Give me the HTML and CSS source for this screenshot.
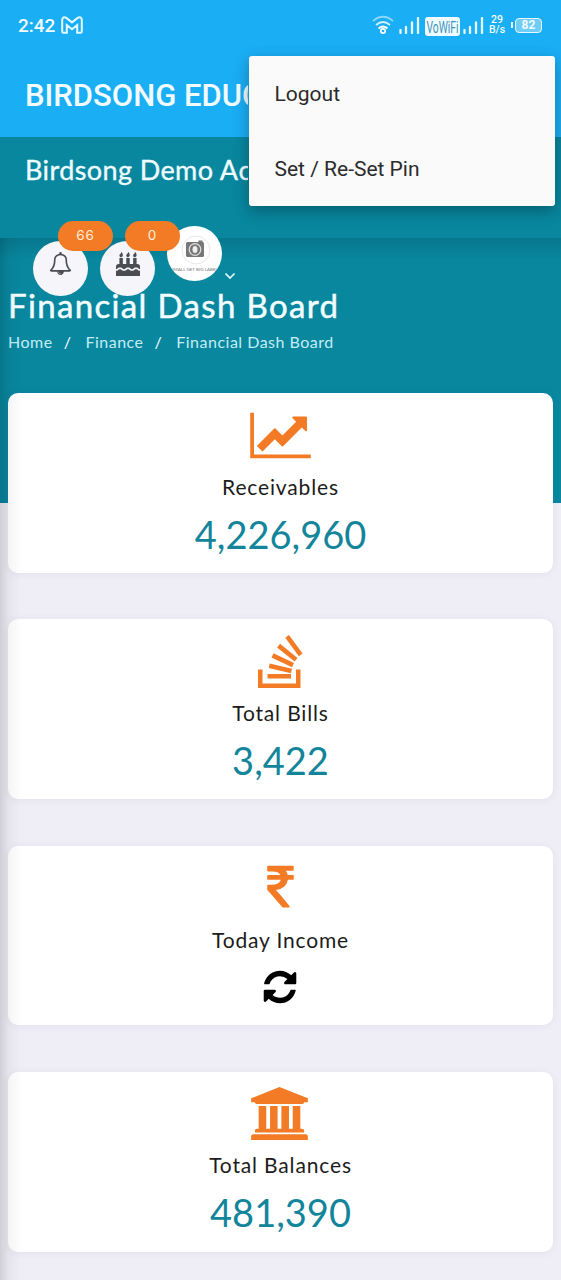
FILE: index.html
```html
<!DOCTYPE html>
<html lang="en">
<head>
  <meta charset="UTF-8">
  <meta name="viewport" content="width=device-width, initial-scale=1">
  <title>Financial Dash Board</title>
  <link rel="stylesheet" href="styles.css">
</head>
<body>
  <header class="app-bar">
    <div class="status-bar">
      <span class="clock">2:42</span>
      <svg class="mail-icon" viewBox="0 0 22 18" width="22" height="18">
        <path d="M1.200 4v11.500q0 1.300 1.300 1.300h3.300V9l5.200 4.200L16.200 9v7.800h3.300q1.300 0 1.300-1.300V3.500Q20 .2 17 1.700l-6 4.700-6-4.700Q2 .2 1.200 3.500z"/>
      </svg>
      <div class="status-right">
        <svg class="wifi" viewBox="0 0 22 20" width="22" height="20">
          <path d="M1 6q10-8.500 20 0" opacity=".5"/>
          <path d="M4 10q7-6 14 0" opacity=".8"/>
          <path d="M6.500 13.500q4.500-4 9 0"/>
          <circle cx="11" cy="16" r="2.200"/>
        </svg>
        <svg class="signal" viewBox="0 0 21 17" width="21" height="17">
          <path d="M1.500 13v3M7 10v6M13 5.500V16M19 1v15"/>
        </svg>
        <svg class="vowifi" viewBox="0 0 35 19" width="35" height="19">
          <rect width="35" height="19" rx="3"/>
          <text x="1.500" y="15.500" textLength="32" lengthAdjust="spacingAndGlyphs">VoWiFi</text>
        </svg>
        <svg class="signal" viewBox="0 0 21 17" width="21" height="17">
          <path d="M1.500 13v3M7 10v6M13 5.500V16M19 1v15"/>
        </svg>
        <div class="speed">
          <div>29</div>
          <div>B/s</div>
        </div>
        <span class="battery">82</span>
      </div>
    </div>
    <div class="app-title">BIRDSONG EDU<span class="cut">C</span></div>
  </header>

  <div class="school-bar">Birdsong Demo A<span class="cut">c</span></div>

  <main class="page">
    <div class="user-tools">
      <div class="tool">
        <svg viewBox="0 0 1792 1792" width="23" height="23">
          <path d="M912 1696q0-16-16-16-59 0-101.500-42.500t-42.500-101.500q0-16-16-16t-16 16q0 73 51.500 124.500t124.500 51.500q16 0 16-16zm-666-288h1300q-266-300-266-832 0-51-24-105t-69-103-121.500-80.500-169.500-31.500-169.500 31.500-121.500 80.500-69 103-24 105q0 532-266 832zm1482 0q0 52-38 90t-90 38h-448q0 106-75 181t-181 75-181-75-75-181h-448q-52 0-90-38t-38-90q50-42 91-88t85-119.500 74.500-158.500 50-206 19.500-260q0-152 117-282.500t307-158.500q-8-19-8-39 0-40 28-68t68-28 68 28 28 68q0 20-8 39 190 28 307 158.500t117 282.500q0 139 19.500 260t50 206 74.500 158.500 85 119.500 91 88z"/>
        </svg>
        <span class="count">66</span>
      </div>
      <div class="tool">
        <svg viewBox="0 0 1792 1792" width="24" height="24">
          <path d="M1792 1408v384h-1792v-384q45 0 85-14t59-27.500 47-37.500q30-27 51.500-38t56.500-11q24 0 44 7t31 15 33 27q29 25 47 38t58 27 86 14q45 0 86-14.500t58-27 48-37.500q21-19 32.500-27t31-15 43.500-7q35 0 56.500 11t51.500 38q28 24 47 37.500t59 27.500 85 14 85-14 59-27.500 47-37.500q30-27 51.500-38t56.500-11q34 0 55.500 11t51.500 38q28 24 47 37.500t59 27.500 85 14zm0-320v192q-24 0-44-7t-31-15-33-27q-29-25-47-38t-58-27-85-14q-46 0-86 14t-58 27-47 38q-22 19-33 27t-31 15-44 7q-35 0-56.500-11t-51.500-38q-29-25-47-38t-58-27-86-14q-45 0-85 14t-58 27-48 38q-21 19-32.500 27t-31 15-43.500 7q-35 0-56.500-11t-51.500-38q-28-24-47-37.500t-59-27.500-85-14q-46 0-86 14t-58 27-47 38q-30 27-51.500 38t-56.500 11v-192q0-80 56-136t136-56h64v-448h256v448h256v-448h256v448h256v-448h256v448h64q80 0 136 56t56 136zM512 224q0 77-36 118.500t-92 41.500q-53 0-90.500-37.500t-37.500-90.500q0-29 9.500-51t23.500-34 31-28 31-31.500 23.500-44.500 9.500-67q38 0 83 74t45 150zm512 0q0 77-36 118.500t-92 41.500q-53 0-90.500-37.500t-37.500-90.500q0-29 9.500-51t23.500-34 31-28 31-31.500 23.500-44.500 9.500-67q38 0 83 74t45 150zm512 0q0 77-36 118.500t-92 41.500q-53 0-90.500-37.500t-37.500-90.500q0-29 9.500-51t23.500-34 31-28 31-31.500 23.500-44.500 9.500-67q38 0 83 74t45 150z"/>
        </svg>
        <span class="count">0</span>
      </div>
      <div class="avatar">
        <svg viewBox="0 0 40 32" width="40" height="32">
          <circle cx="21" cy="16" r="14" fill="none" stroke="#ddd" stroke-width=".7"/>
          <rect x="11" y="8" width="18" height="15" rx="1.500" fill="#777"/>
          <rect x="23.500" y="6.500" width="4" height="3" fill="#777"/>
          <circle cx="20" cy="15.500" r="5.800" fill="#777" stroke="#ddd" stroke-width="1.300"/>
          <ellipse cx="20" cy="15.500" rx="2.500" ry="3.500" fill="#eee"/>
        </svg>
        <span class="avatar-text">SMALL GET BIG LABEL</span>
      </div>
      <svg class="caret" viewBox="0 0 12 8" width="12" height="8"><path d="M1.500 1.500 6 6l4.500-4.500"/></svg>
    </div>

    <h1>Financial Dash Board</h1>
    <nav class="breadcrumb">
      <a>Home</a><span>/</span><a>Finance</a><span>/</span><a>Financial Dash Board</a>
    </nav>

    <div class="cards">
      <section class="card">
        <svg class="icon" viewBox="0 0 2048 1792" width="61" height="53">
          <path d="M2048 1536v128h-2048v-1536h128v1408h1920zm-128-1248v435q0 21-19.500 29.500t-35.500-7.500l-121-121-633 633q-10 10-23 10t-23-10l-233-233-416 416-192-192 585-585q10-10 23-10t23 10l233 233 464-464-121-121q-16-16-7.500-35.500t29.500-19.500h435q14 0 23 9t9 23z"/>
        </svg>
        <h2>Receivables</h2>
        <p>4,226,960</p>
      </section>

      <section class="card">
        <svg class="icon" viewBox="0 0 46 53" width="46" height="53">
          <path d="M0 34.500h4.500V48.500H38V34.500h4.500V53H0zM9.500 39h23.500v4.500H9.500z"/>
          <path d="M11.700 28.500 34 33.700 33 38.200 10.700 33zM15.500 18.200 36 28l-2 4.200L13.500 22.400zM22 8.800 39.500 23l-2.900 3.600L19.100 12.400zM31 0 44.500 18.400 40.800 21.200 27.300 2.800z"/>
        </svg>
        <h2>Total Bills</h2>
        <p>3,422</p>
      </section>

      <section class="card">
        <svg class="icon" viewBox="0 0 1792 1792" width="53" height="53">
          <path d="M1345 470v102q0 14-9 23t-23 9h-168q-23 144-129 234t-276 110q167 178 459 536 14 16 4 34-8 18-29 18h-195q-16 0-25-12-306-367-498-571-9-9-9-22v-127q0-13 9.500-22.500t22.500-9.500h112q132 0 212.500-43t102.500-125h-427q-14 0-23-9t-9-23v-102q0-14 9-23t23-9h413q-57-113-268-113h-145q-13 0-22.500-9.500t-9.500-22.500v-133q0-14 9-23t23-9h832q14 0 23 9t9 23v102q0 14-9 23t-23 9h-233q47 61 64 144h171q14 0 23 9t9 23z"/>
        </svg>
        <h2>Today Income</h2>
        <svg class="refresh" viewBox="0 0 1792 1792" width="38" height="38">
          <path d="M1639 1056q0 5-1 7-64 268-268 434.500t-478 166.500q-146 0-282.500-55t-243.500-157l-129 129q-19 19-45 19t-45-19-19-45v-448q0-26 19-45t45-19h448q26 0 45 19t19 45-19 45l-137 137q71 66 161 102t187 36q134 0 250-65t186-179q11-17 53-117 8-23 30-23h192q13 0 22.500 9.500t9.500 22.500zm25-800v448q0 26-19 45t-45 19h-448q-26 0-45-19t-19-45 19-45l138-138q-148-137-349-137-134 0-250 65t-186 179q-11 17-53 117-8 23-30 23h-199q-13 0-22.500-9.500t-9.500-22.500v-7q65-268 270-434.500t480-166.500q146 0 284 55.500t245 156.500l130-129q19-19 45-19t45 19 19 45z"/>
        </svg>
      </section>

      <section class="card">
        <svg class="icon bank" viewBox="0 0 1920 1792" width="57" height="53">
          <path d="M960 0l960 384v128h-128q0 26-20.500 45t-48.500 19h-1526q-28 0-48.500-19t-20.500-45h-128v-128zm-704 640h256v768h128v-768h256v768h128v-768h256v768h128v-768h256v768h59q28 0 48.500 19t20.500 45v64h-1664v-64q0-26 20.500-45t48.500-19h59v-768zm1595 960q28 0 48.500 19t20.500 45v128h-1920v-128q0-26 20.500-45t48.500-19h1782z"/>
        </svg>
        <h2>Total Balances</h2>
        <p>481,390</p>
      </section>
    </div>
    <div class="drawer-shadow"></div>
  </main>

  <div class="popup-menu">
    <a>Logout</a>
    <a>Set / Re-Set Pin</a>
  </div>
</body>
</html>
```
FILE: styles.css
```css
* {
  box-sizing: border-box;
}
body {
  margin: 0;
  height: 1280px;
  overflow: hidden;
  position: relative;
  font-family: Lato, "Open Sans", sans-serif;
  background: #efedf6;
}
svg {
  display: block;
  flex-shrink: 0;
}

/* top bar */
.app-bar {
  height: 137px;
  background: #1aaef5;
  color: #f2fcff;
  font-family: Roboto, sans-serif;
}
.status-bar {
  display: flex;
  align-items: center;
  height: 50px;
  padding: 0 19px 0 18px;
}
.clock {
  width: 43px;
  font-size: 19px;
  font-weight: 500;
}
.mail-icon {
  fill: none;
  stroke: #e4f8ff;
  stroke-width: 2;
}
.status-right {
  display: flex;
  align-items: center;
  margin-left: auto;
}
.wifi {
  margin-right: 5px;
  fill: none;
  stroke: #fff;
  stroke-width: 1.7;
}
.signal {
  stroke: #e4f8ff;
  stroke-width: 2.3;
  stroke-linecap: round;
}
.vowifi {
  margin: 2px 3px 0 5px;
}
.vowifi rect {
  fill: #f0fbff;
}
.vowifi text {
  fill: #3c93bb;
  font-size: 16px;
}
.speed {
  width: 18px;
  margin: 0 6px 0 4px;
  font-size: 10.5px;
  font-weight: 500;
  line-height: 10px;
  text-align: center;
}
.battery {
  position: relative;
  width: 27px;
  height: 15px;
  margin-left: 3px;
  border: 1.5px solid #e4f8ff;
  border-radius: 4px;
  background: #70cdf8;
  font-size: 12px;
  font-weight: 700;
  line-height: 13px;
  text-align: center;
}
.battery::before {
  content: "";
  position: absolute;
  left: -5px;
  top: 3px;
  width: 2px;
  height: 6px;
  background: #e4f8ff;
}
.app-title,
.school-bar {
  white-space: nowrap;
}
.cut {
  display: inline-block;
  width: 9px;
  overflow: hidden;
  vertical-align: top;
}
.app-title {
  padding: 25px 0 0 25px;
  font-size: 31px;
  font-weight: 500;
  line-height: 42px;
}
.app-title .cut {
  width: 6px;
}
.school-bar {
  height: 101px;
  padding: 13px 0 0 25px;
  background: #08879f;
  color: #effcff;
  font-size: 27px;
  line-height: 40px;
  letter-spacing: .4px;
  -webkit-text-stroke: .35px #effcff;
}

/* dashboard */
.page {
  position: relative;
  height: 1042px;
  padding: 0 8px;
  background:
    linear-gradient(rgba(0,0,0,0.12), rgba(0,0,0,0) 22px) no-repeat,
    linear-gradient(#08879f 265px, #efedf6 265px);
}
.user-tools {
  display: flex;
  height: 59px;
  margin-top: -12px;
  padding-left: 25px;
  position: absolute;
}
.tool {
  position: relative;
  width: 55px;
  height: 55px;
  margin: 15px 12px 0 0;
  padding-top: 11px;
  border-radius: 50%;
  background: #f5f5fa;
}
.tool svg {
  margin: 0 auto;
  fill: #4b4d53;
}
.count {
  position: absolute;
  top: -20px;
  left: 25px;
  width: 55px;
  height: 30px;
  border-radius: 15px;
  background: #f47b25;
  color: #ffeedf;
  font: 13.5px/28px Inter, sans-serif;
  letter-spacing: .8px;
  text-align: center;
  z-index: 1;
}
.avatar {
  width: 55px;
  height: 55px;
  border-radius: 50%;
  background: #fff;
  overflow: hidden;
}
.avatar svg {
  margin: 8px 0 0 8px;
}
.avatar-text {
  display: block;
  color: #777;
  font-size: 4.5px;
  line-height: 8px;
  text-align: center;
  white-space: nowrap;
}
.caret {
  margin: 46px 0 0 2px;
  fill: none;
  stroke: #e8fbff;
  stroke-width: 1.7;
}
h1 {
  position: relative;
  margin: 0;
  padding-top: 46px;
  color: #f2fdff;
  font-size: 33px;
  font-weight: 400;
  line-height: 42px;
  letter-spacing: 1.35px;
  white-space: nowrap;
  -webkit-text-stroke: .5px #f2fdff;
}
.breadcrumb {
  display: flex;
  height: 67px;
  padding-top: 4px;
  color: #c4ecf5;
  font-size: 16px;
  line-height: 24px;
  letter-spacing: .5px;
  white-space: nowrap;
}
.breadcrumb span {
  margin: 0 14px 0 11px;
  color: #fff;
}
.cards {
  display: grid;
  gap: 46.6px;
}
.card {
  display: flex;
  flex-direction: column;
  align-items: center;
  height: 179.7px;
  padding-top: 16px;
  border-radius: 10px;
  background: #fff;
  box-shadow: 0 1px 8px rgba(60,50,100,0.06);
}
.icon {
  fill: #f47b25;
}
.bank {
  margin: -1px 3px 0 0;
}
.card h2 {
  margin: 10px 0 0;
  color: #1c1c1c;
  font-size: 21px;
  font-weight: 400;
  line-height: 30px;
  letter-spacing: .85px;
}
.card p {
  margin: 5px 0 0;
  color: #12859b;
  font-size: 38px;
  line-height: 54px;
}
.refresh {
  margin: 13px 1px 0 0;
}
.drawer-shadow {
  position: absolute;
  top: 0;
  left: 0;
  width: 22px;
  height: 100%;
  background: linear-gradient(to right, rgba(0,0,0,0.13), rgba(0,0,0,0.04) 9px, rgba(0,0,0,0));
}

/* overflow menu */
.popup-menu {
  position: absolute;
  top: 56px;
  left: 249px;
  width: 306px;
  height: 150px;
  border-radius: 3px;
  background: #fafafa;
  box-shadow: 0 5px 16px rgba(0,0,0,0.3);
}
.popup-menu a {
  display: block;
  height: 75px;
  padding-left: 25.5px;
  color: #2b2b2b;
  font: 21px/77px Roboto, sans-serif;
}
```
